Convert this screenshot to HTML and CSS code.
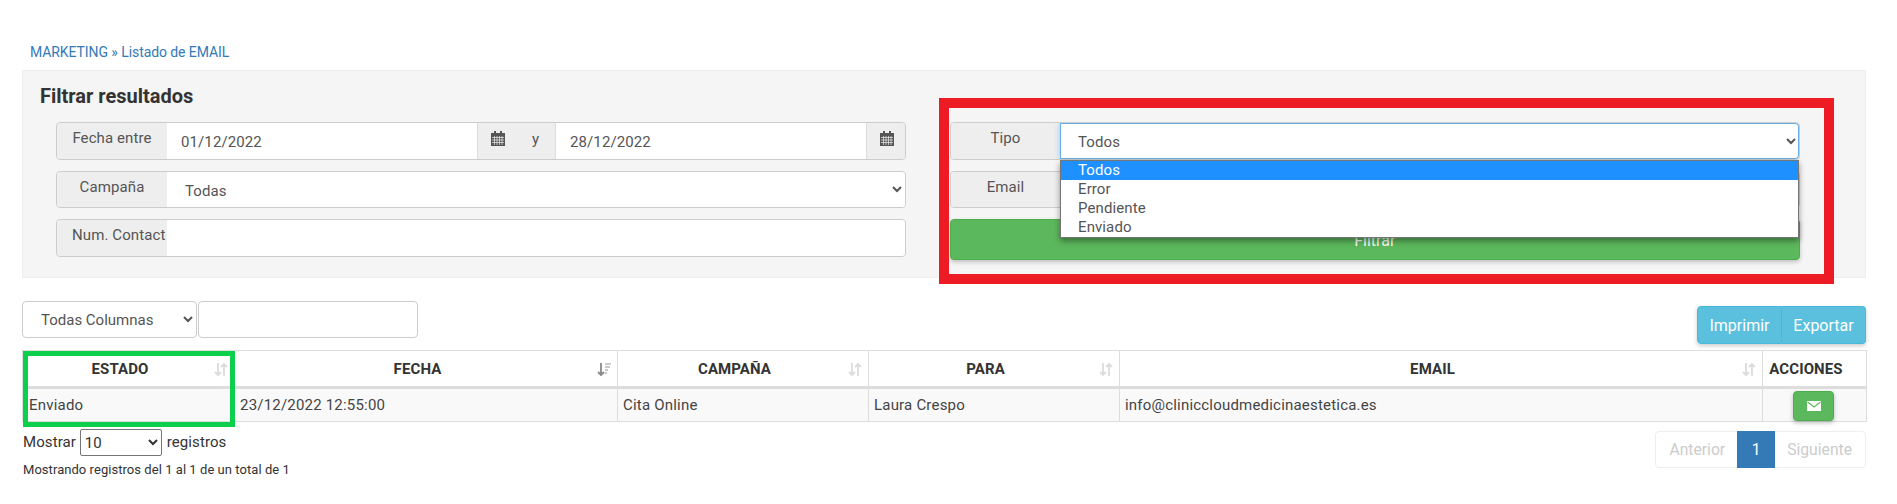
FILE: index.html
```html
<!DOCTYPE html>
<html lang="es">
<head>
<meta charset="utf-8">
<title>Listado de EMAIL</title>
<link rel="stylesheet" href="styles.css">
</head>
<body>
<div class="page">
  <div class="crumb"><a href="#">MARKETING » Listado de EMAIL</a></div>

  <section class="panel">
    <h3 class="panel-title">Filtrar resultados</h3>
    <div class="filters">
      <div class="col">
        <div class="group tall">
          <span class="addon label">Fecha entre</span>
          <input class="field" type="text" value="01/12/2022">
          <span class="addon mid">
            <svg class="cal" viewBox="0 0 14 15"><path d="M0 2h3V0h2v2h4V0h2v2h3v13H0z" fill="#555"/><path d="M1 6.5h12M1 9h12M1 11.500h12M3.500 5v9M6 5v9M8.500 5v9M11 5v9" stroke="#eee" stroke-width=".7" fill="none"/></svg>
            <span class="y">y</span>
          </span>
          <input class="field" type="text" value="28/12/2022">
          <span class="addon end">
            <svg class="cal" viewBox="0 0 14 15"><path d="M0 2h3V0h2v2h4V0h2v2h3v13H0z" fill="#555"/><path d="M1 6.5h12M1 9h12M1 11.500h12M3.500 5v9M6 5v9M8.500 5v9M11 5v9" stroke="#eee" stroke-width=".7" fill="none"/></svg>
          </span>
        </div>
        <div class="group short">
          <span class="addon label">Campaña</span>
          <select class="field select"><option>Todas</option></select>
        </div>
        <div class="group tall">
          <span class="addon label">Num. Contact</span>
          <input class="field" type="text">
        </div>
      </div>

      <div class="col annotated">
        <div class="group tall">
          <span class="addon label">Tipo</span>
          <select class="field select focus"><option>Todos</option></select>
        </div>
        <div class="group short">
          <span class="addon label">Email</span>
          <input class="field" type="text">
        </div>
        <button class="btn-filter" type="button">Filtrar</button>
        <ul class="dropdown">
          <li class="active">Todos</li>
          <li>Error</li>
          <li>Pendiente</li>
          <li>Enviado</li>
        </ul>
        <div class="frame-red"></div>
      </div>
    </div>
  </section>

  <div class="toolbar">
    <div class="search">
      <select class="col-select"><option>Todas Columnas</option></select>
      <input class="search-input" type="text">
    </div>
    <div class="btn-group">
      <button class="btn-info" type="button">Imprimir</button>
      <button class="btn-info" type="button">Exportar</button>
    </div>
  </div>

  <div class="table-wrap">
    <table class="grid">
      <colgroup>
        <col class="c1"><col class="c2"><col class="c3"><col class="c4"><col class="c5"><col class="c6">
      </colgroup>
      <thead>
        <tr>
          <th>ESTADO<svg class="sort" viewBox="0 0 14 15"><path d="M4 1v12M1 10l3 3 3-3M10 14V2M7 5l3-3 3 3" stroke="#dcdcdc" stroke-width="1.800" fill="none"/></svg></th>
          <th>FECHA<svg class="sort" viewBox="0 0 14 15"><path d="M4 1v12M1 10l3 3 3-3" stroke="#888" stroke-width="1.800" fill="none"/><path d="M8 2h6M8 5h5M8 8h3M8 11h2" stroke="#bbb" stroke-width="1.500" fill="none"/></svg></th>
          <th>CAMPAÑA<svg class="sort" viewBox="0 0 14 15"><path d="M4 1v12M1 10l3 3 3-3M10 14V2M7 5l3-3 3 3" stroke="#dcdcdc" stroke-width="1.800" fill="none"/></svg></th>
          <th>PARA<svg class="sort" viewBox="0 0 14 15"><path d="M4 1v12M1 10l3 3 3-3M10 14V2M7 5l3-3 3 3" stroke="#dcdcdc" stroke-width="1.800" fill="none"/></svg></th>
          <th>EMAIL<svg class="sort" viewBox="0 0 14 15"><path d="M4 1v12M1 10l3 3 3-3M10 14V2M7 5l3-3 3 3" stroke="#dcdcdc" stroke-width="1.800" fill="none"/></svg></th>
          <th class="actions-head">ACCIONES</th>
        </tr>
      </thead>
      <tbody>
        <tr>
          <td class="first">Enviado</td>
          <td>23/12/2022 12:55:00</td>
          <td>Cita Online</td>
          <td>Laura Crespo</td>
          <td>info@cliniccloudmedicinaestetica.es</td>
          <td class="actions">
            <button class="btn-mail" type="button" aria-label="Enviar">
              <svg viewBox="0 0 14 10" class="mail"><rect width="14" height="10" fill="#fff"/><path d="M0.500 1L7 6l6.500-5" stroke="#5cb85c" stroke-width="1.100" fill="none"/></svg>
            </button>
          </td>
        </tr>
      </tbody>
    </table>
    <div class="frame-green"></div>
  </div>

  <div class="footer">
    <div class="footer-left">
      <div class="length">Mostrar <select class="len-select"><option>10</option></select> registros</div>
      <div class="info">Mostrando registros del 1 al 1 de un total de 1</div>
    </div>
    <div class="pager">
      <span class="pg off prev">Anterior</span>
      <span class="pg on">1</span>
      <span class="pg off next">Siguiente</span>
    </div>
  </div>
</div>
</body>
</html>
```

FILE: styles.css
```css
* { box-sizing: border-box; }
html, body { margin: 0; background: #fff; }
body {
  font-family: Roboto, "Liberation Sans", sans-serif;
  font-size: 15px;
  letter-spacing: .1px;
  color: #555;
  overflow: hidden;
}
.page { padding: 0 31px 0 22px; height: 504px; }

.crumb { padding: 44px 0 0 8px; height: 70px; font-size: 14px; line-height: 16px; letter-spacing: -.08px; }
.crumb a { color: #337ab7; text-decoration: none; }

.panel {
  height: 208px;
  background: #f5f5f5;
  border: 1px solid #eee;
  padding: 0 0 0 33px;
}
.panel-title {
  height: 51px;
  margin: 0 0 0 -16px;
  padding: 13px 0 0;
  font-size: 20px;
  line-height: 24px;
  font-weight: 700;
  letter-spacing: 0;
  color: #333;
}
.filters { display: grid; grid-template-columns: 850px 849.5px; column-gap: 44px; }
.col { display: flex; flex-direction: column; gap: 11px; }
.annotated { position: relative; }

.group {
  display: flex;
  border: 1px solid #ccc;
  border-radius: 4px;
  overflow: hidden;
  background: #eee;
  box-shadow: inset 0 1px 1px rgba(0,0,0,.075);
}
.tall { height: 38px; }
.short { height: 37px; }

.addon { background: #eee; color: #555; line-height: 20px; white-space: nowrap; }
.label { flex: 0 0 110px; width: 110px; padding: 5px 15px 0; text-align: center; overflow: visible; }
.annotated .label { flex-basis: 109px; width: 109px; }
.mid {
  flex: 0 0 79px;
  width: 79px;
  border-left: 1px solid #ddd;
  border-right: 1px solid #ddd;
  padding: 8px 0 0 13px;
  display: flex;
  align-items: flex-start;
}
.end { flex: 0 0 39px; border-left: 1px solid #ddd; padding: 8px 0 0 13px; }
.cal { width: 14px; height: 15px; display: block; }
.y { margin-left: 27px; margin-top: -2px; }

.field {
  flex: 1 1 0;
  min-width: 0;
  border: 0;
  background: #fff;
  font: inherit;
  letter-spacing: .1px;
  color: #555;
  padding: 2px 14px 0;
  outline: none;
}
.select { padding: 2px 0 0 14px; }
.focus { box-shadow: inset 0 0 0 1px #66afe9, 0 0 6px rgba(102,175,233,.6); border-radius: 0 4px 4px 0; }

.btn-filter {
  height: 41px;
  background: #5cb85c;
  border: 1px solid #4cae4c;
  border-radius: 4px;
  color: #fff;
  font: inherit;
  font-size: 16px;
  padding: 1px 0 0;
  box-shadow: 0 2px 4px rgba(0,0,0,.22);
}

.dropdown {
  position: absolute;
  left: 110px;
  top: 38px;
  width: 739px;
  height: 78px;
  margin: 0;
  padding: 0;
  list-style: none;
  background: #fff;
  border: 1px solid #767676;
  box-shadow: 0 3px 6px rgba(0,0,0,.4);
  line-height: 19px;
  color: #555;
}
.dropdown li { height: 19px; padding-left: 17px; }
.dropdown .active { background: #1e90ff; color: #fff; }

.frame-red {
  position: absolute;
  left: -11px;
  top: -24px;
  width: 895px;
  height: 186px;
  border: 10px solid #ed1c24;
  pointer-events: none;
}

.toolbar { display: flex; justify-content: space-between; height: 72px; padding-top: 23px; }
.search { display: flex; gap: 1px; height: 37px; }
.col-select {
  width: 175px;
  background: #fff;
  border: 1px solid #ccc;
  border-radius: 4px;
  font: inherit;
  color: #555;
  padding-left: 14px;
}
.search-input { width: 220px; border: 1px solid #ccc; border-radius: 4px; background: #fff; }
.btn-group { display: flex; height: 38px; margin-top: 5px; box-shadow: 0 2px 4px rgba(0,0,0,.2); border-radius: 4px; }
.btn-info {
  background: #5bc0de;
  border: 1px solid #46b8da;
  color: #fff;
  font: inherit;
  font-size: 16px;
  padding: 0;
  width: 85px;
}
.btn-info:first-child { border-radius: 4px 0 0 4px; }
.btn-info:last-child { border-radius: 0 4px 4px 0; border-left: 0; width: 84px; }

.table-wrap { position: relative; }
.grid { width: 1844px; table-layout: fixed; border-collapse: collapse; color: #333; }
.c1 { width: 212px; } .c2 { width: 383px; } .c3 { width: 251px; } .c4 { width: 251px; } .c5 { width: 643px; } .c6 { width: 104px; }
.grid th, .grid td { border: 1px solid #ddd; }
.grid th {
  position: relative;
  height: 37px;
  border-bottom: 3px solid #ddd;
  font-weight: 700;
  text-align: center;
  padding: 0 17px 0 0;
}
.grid td { height: 34px; padding: 0 5px; background: #f9f9f9; color: #444; letter-spacing: .2px; }
.grid .first { padding-left: 6px; }
.grid .actions { text-align: center; padding: 0 2px 0 0; }
.sort { position: absolute; right: 6px; top: 11px; width: 14px; height: 15px; }
.btn-mail {
  width: 41px;
  height: 30px;
  margin-top: 1px;
  display: inline-flex;
  align-items: center;
  justify-content: center;
  vertical-align: middle;
  background: #5cb85c;
  border: 1px solid #4cae4c;
  border-radius: 4px;
  padding: 0;
  box-shadow: 0 2px 4px rgba(0,0,0,.25);
}
.mail { width: 14px; height: 10px; }

.frame-green {
  position: absolute;
  left: 1px;
  top: 1px;
  width: 212px;
  height: 76px;
  border: 5px solid #0ccf4b;
  pointer-events: none;
}

.footer { display: flex; justify-content: space-between; }
.footer-left { padding-left: 1px; }
.length { padding-top: 7px; height: 40px; line-height: 27px; color: #333; }
.len-select {
  width: 82px;
  height: 27px;
  margin-right: 1px;
  font: inherit;
  color: #333;
  background: #fff;
  border: 1px solid #767676;
  border-radius: 2px;
  vertical-align: top;
}
.info { font-size: 13px; line-height: 16px; letter-spacing: .05px; color: #333; }
.pager {
  display: flex;
  margin-top: 9px;
  height: 37px;
  border: 1px solid #eee;
  border-radius: 4px;
  font-size: 15.7px;
  letter-spacing: 0;
  line-height: 35px;
}
.pg { padding: 0 13px; }
.prev { padding-right: 12px; }
.next { padding-left: 12px; }
.off { color: #ccc; }
.on { background: #337ab7; color: #fff; width: 38px; padding: 0; text-align: center; margin: -1px 0; line-height: 37px; }
```
